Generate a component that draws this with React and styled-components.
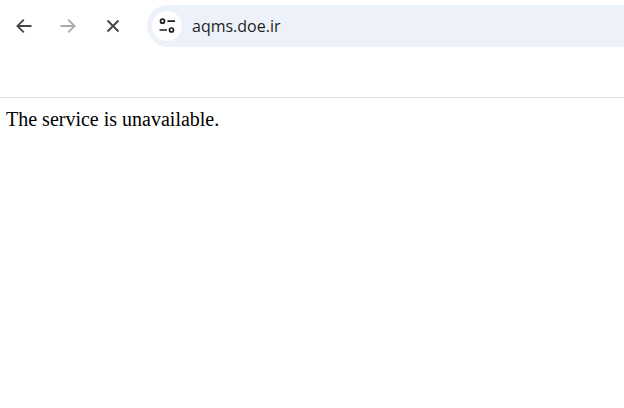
import React from 'react';
import styled, { createGlobalStyle } from 'styled-components';

const GlobalStyle = createGlobalStyle`
  html, body {
    margin: 0;
    padding: 0;
    background: #fff;
    overflow: hidden;
  }
`;

const Page = styled.div`
  width: 624px;
  height: 408px;
  overflow: hidden;
`;

const Toolbar = styled.header`
  height: 98px;
  box-sizing: border-box;
  padding-top: 5px;
  border-bottom: 1px solid #e0e0e0;
  display: flex;
  align-items: flex-start;
`;

const Nav = styled.nav`
  width: 147px;
  height: 42px;
  flex-shrink: 0;
  padding-left: 12.5px;
  box-sizing: border-box;
  display: flex;
  align-items: center;
  gap: 22.5px;
`;

const NavButton = styled.button`
  width: 22px;
  height: 22px;
  padding: 0;
  border: none;
  background: none;
  color: ${p => (p.disabled ? '#a9a9a9' : '#474747')};
  display: flex;
  align-items: center;
  justify-content: center;
`;

const Omnibox = styled.div`
  flex: 1;
  height: 42px;
  border-radius: 21px 0 0 21px;
  background: #edf2fa;
  padding-left: 5px;
  display: flex;
  align-items: center;
  gap: 10px;
`;

const SiteInfo = styled.div`
  width: 30px;
  height: 30px;
  border-radius: 50%;
  background: #fff;
  color: #1f1f1f;
  display: flex;
  align-items: center;
  justify-content: center;
`;

const Url = styled.span`
  font-family: "Open Sans", "Noto Sans", sans-serif;
  font-size: 16px;
  color: #1f1f1f;
`;

const Message = styled.p`
  margin: 0;
  padding: 10px 0 0 6px;
  font-family: "Liberation Serif", "Times New Roman", serif;
  font-size: 20px;
  line-height: 23px;
  color: #000;
`;

const BackIcon = () => (
  <svg width="20" height="20" viewBox="0 0 20 20" fill="none" stroke="currentColor" strokeWidth="1.8">
    <path d="M17.5 10H3.6M9.8 3.6 3.4 10l6.4 6.4" />
  </svg>
);

const ForwardIcon = () => (
  <svg width="20" height="20" viewBox="0 0 20 20" fill="none" stroke="currentColor" strokeWidth="1.8">
    <path d="M2.5 10h13.9M10.2 3.6 16.6 10l-6.4 6.4" />
  </svg>
);

const CloseIcon = () => (
  <svg width="20" height="20" viewBox="0 0 20 20" fill="none" stroke="currentColor" strokeWidth="2">
    <path d="M4.5 4.5l11 11M15.5 4.5l-11 11" />
  </svg>
);

const TuneIcon = () => (
  <svg width="18" height="18" viewBox="0 0 18 18" fill="none" stroke="currentColor" strokeWidth="1.7">
    <circle cx="4.5" cy="4.2" r="2" />
    <path d="M9.5 4.2H17M1.5 13H9" />
    <circle cx="13.5" cy="13" r="2" />
  </svg>
);

const App = () => (
  <Page>
    <GlobalStyle />
    <Toolbar>
      <Nav>
        <NavButton><BackIcon /></NavButton>
        <NavButton disabled><ForwardIcon /></NavButton>
        <NavButton><CloseIcon /></NavButton>
      </Nav>
      <Omnibox>
        <SiteInfo><TuneIcon /></SiteInfo>
        <Url>aqms.doe.ir</Url>
      </Omnibox>
    </Toolbar>
    <Message>The service is unavailable.</Message>
  </Page>
);

export default App;
